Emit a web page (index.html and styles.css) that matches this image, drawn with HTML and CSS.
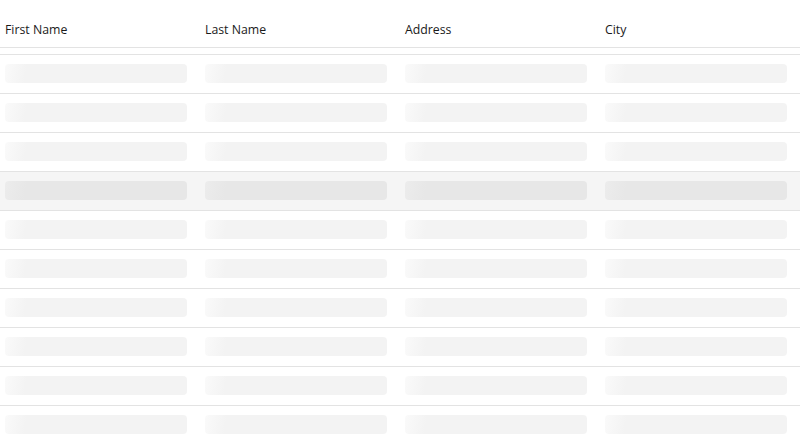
FILE: index.html
```html
<!DOCTYPE html>
<html lang="en">
<head>
  <meta charset="UTF-8" />
  <title>Loading grid</title>
  <link rel="stylesheet" href="styles.css">
</head>
<body>
  <div class="grid">
    <div class="grid-header">
      <div class="col">First Name</div>
      <div class="col">Last Name</div>
      <div class="col">Address</div>
      <div class="col">City</div>
    </div>
    <div class="grid-body" id="gridBody"></div>
  </div>

  <script>
    const body = document.getElementById('gridBody');
    for (let i = 0; i < 10; i++) {
      const row = document.createElement('div');
      row.className = 'row' + (i === 3 ? ' hover' : '');
      for (let c = 0; c < 4; c++) {
        const cell = document.createElement('div');
        cell.className = 'col';
        cell.innerHTML = '<span class="skeleton"></span>';
        row.appendChild(cell);
      }
      body.appendChild(row);
    }
  </script>
</body>
</html>
```

FILE: styles.css
```css
body {
  margin: 0;
  background: #fff;
  color: #1a1a1a;
  font-family: 'Open Sans', 'Noto Sans', sans-serif;
  font-size: 12.3px;
  overflow: hidden;
}
.grid {
  width: 800px;
}
.grid-header {
  display: grid;
  grid-template-columns: repeat(4, 200px);
  align-items: center;
  border-bottom: 1px solid #e3e3e3;
  padding-top: 11px;
  box-sizing: border-box;
  height: 48px;
}
.grid-header .col {
  padding-left: 5px;
}
.grid-body {
  margin-top: 6px;
  border-top: 1px solid #e3e3e3;
}
.row {
  display: grid;
  grid-template-columns: repeat(4, 200px);
  height: 38px;
  border-bottom: 1px solid #e3e3e3;
  align-items: center;
}
.row .col {
  padding: 0 13px 0 5px;
}
.skeleton {
  display: block;
  height: 19px;
  margin-top: -1px;
  border-radius: 4px;
  background: linear-gradient(100deg, #fafafa 0, #f3f3f3 22px);
}
.row.hover {
  background: #f5f5f5;
}
.row.hover .skeleton {
  background: linear-gradient(100deg, #ececec 0, #e7e7e7 22px);
}
```
